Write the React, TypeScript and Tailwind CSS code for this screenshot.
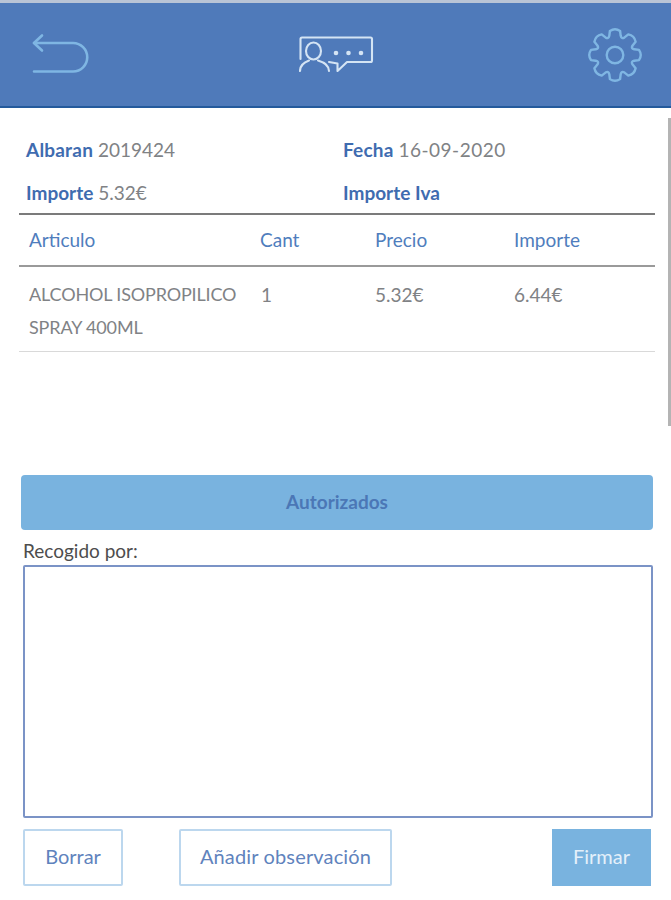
function Back() {
  return (
    <svg width="58" height="44" viewBox="0 0 58 44" fill="none" stroke="#7fb6e3" strokeWidth="2.6" strokeLinecap="round" strokeLinejoin="round">
      <path d="M10 2.500 L2 10 L10 17.500" />
      <path d="M2 10 H41 A14.250 14.250 0 0 1 41 38.500 H2" />
    </svg>
  );
}
function Chat() {
  return (
    <svg className="mr-[4px]" width="76" height="38" viewBox="0 0 76 38" fill="none" stroke="#d4e4f4" strokeWidth="2.1" strokeLinecap="round" strokeLinejoin="round">
      <path d="M1.500 23 V3 Q1.500 1.500 3 1.500 H71.500 Q73 1.500 73 3 V24.500 Q73 26 71.500 26 H48 L38.500 35 V27.500 L30 26" />
      <ellipse cx="14.500" cy="15" rx="7.500" ry="8.500" />
      <path d="M1 35 C1 29 6 26 10 24.500 M19 24.500 C24 26 30 29 30 35" />
      <circle cx="37" cy="17" r="2.300" fill="#d4e4f4" stroke="none" />
      <circle cx="49.500" cy="17" r="2.300" fill="#d4e4f4" stroke="none" />
      <circle cx="62" cy="17" r="2.300" fill="#d4e4f4" stroke="none" />
    </svg>
  );
}
function Gear() {
  const cx = 27, cy = 27, n = 8;
  const p = (r: number, t: number) => `${(cx + r * Math.cos(t)).toFixed(1)} ${(cy + r * Math.sin(t)).toFixed(1)}`;
  const step = (Math.PI * 2) / n;
  let d = "";
  for (let i = 0; i < n; i++) {
    const a = i * step - Math.PI / 2;
    const b = a + step;
    d += (i === 0 ? "M" : "L") + p(24.500, a - 0.21);
    d += " Q" + p(27.500, a) + " " + p(24.500, a + 0.21);
    d += " L" + p(20, a + 0.29);
    d += " Q" + p(17, a + step / 2) + " " + p(20, b - 0.29) + " ";
  }
  return (
    <svg width="54" height="54" viewBox="0 0 54 54" fill="none" stroke="#7fb6e3" strokeWidth="2.4" strokeLinejoin="round">
      <path d={d + "Z"} />
      <circle cx={cx} cy={cy} r="8.300" />
    </svg>
  );
}

export default function App() {
  return (
    <div className="w-[671px] h-[900px] bg-white overflow-hidden relative font-['Lato','Liberation_Sans',sans-serif] text-[#808285] text-[19px]">
      <header className="h-[108px] bg-[#4f7aba] border-t-[3px] border-t-[#b9c4d6] border-b-2 border-b-[#245a9c] flex items-center justify-between pl-[32px] pr-[29px]">
        <Back />
        <Chat />
        <Gear />
      </header>

      <div className="absolute right-0 top-[118px] w-[3px] h-[308px] bg-[#b4b4b4]" />

      <section className="pl-[26px] pt-[30px] grid grid-cols-[317px_1fr] gap-y-[19px] leading-[24px]">
        <div><b className="text-[#3f6cb0] font-bold tracking-[0.2px]">Albaran</b> 2019424</div>
        <div><b className="text-[#3f6cb0] font-bold tracking-[0.2px]">Fecha</b> <span className="tracking-[0.5px]">16-09-2020</span></div>
        <div><b className="text-[#3f6cb0] font-bold">Importe</b> 5.32€</div>
        <div><b className="text-[#3f6cb0] font-bold">Importe Iva</b></div>
      </section>

      <div className="mx-[19px] mt-[8px] w-[636px]">
        <div className="border-t-2 border-[#7b7b7b] border-b-2 border-b-[#9a9a9a] h-[54px] grid grid-cols-[231px_115px_139px_1fr] pl-[10px] items-center text-[#4f7dbd]">
          <div>Articulo</div>
          <div>Cant</div>
          <div>Precio</div>
          <div>Importe</div>
        </div>
        <div className="border-b border-[#d9d9d9] h-[85px] grid grid-cols-[231px_115px_139px_1fr] pl-[10px] pt-[11px] leading-[33px]">
          <div className="whitespace-nowrap text-[18px] tracking-[-0.15px]">ALCOHOL ISOPROPILICO<br />SPRAY 400ML</div>
          <div className="pl-[1px]">1</div>
          <div>5.32€</div>
          <div>6.44€</div>
        </div>
      </div>

      <div className="mx-[21px] mt-[123px] w-[632px] h-[55px] rounded-[4px] bg-[#79b3df] flex items-center justify-center font-bold text-[#4b77b6]">
        Autorizados
      </div>

      <div className="ml-[23px] mt-[9px] leading-[24px] text-[#4d4d4d]">Recogido por:</div>

      <div className="ml-[23px] mt-[2px] w-[630px] h-[253px] border-2 border-[#7b93c6] rounded-[2px]" />

      <div className="ml-[23px] mr-[20px] mt-[11px] flex items-stretch h-[57px] text-[#5f83bd] text-[20px]">
        <div className="w-[100px] border-2 border-[#bcd7ee] rounded-[2px] flex items-center justify-center pb-[3px]">Borrar</div>
        <div className="ml-[56px] w-[213px] border-2 border-[#bcd7ee] rounded-[2px] flex items-center justify-center pb-[3px] tracking-[0.15px]">Añadir observación</div>
        <div className="ml-auto w-[99px] bg-[#79b3df] flex items-center justify-center pb-[3px] text-[#e4f0fa]">Firmar</div>
      </div>
    </div>
  );
}
